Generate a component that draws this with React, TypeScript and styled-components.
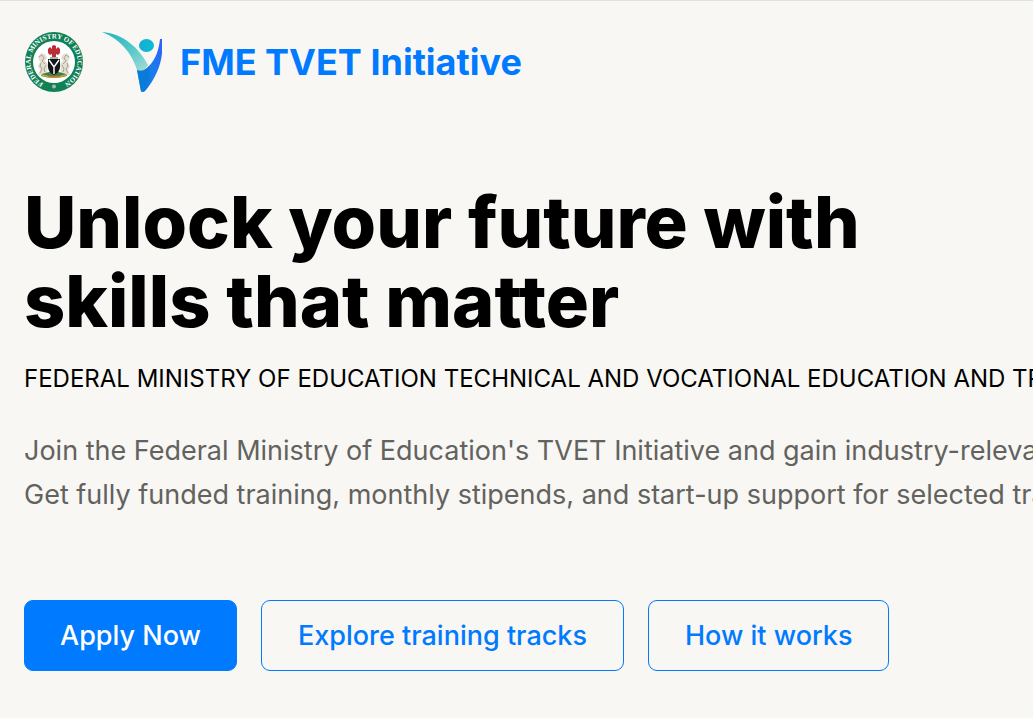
import React from "react";
import styled, { createGlobalStyle } from "styled-components";

const GlobalStyle = createGlobalStyle`
  *, *::before, *::after { box-sizing: border-box; }
  body {
    margin: 0;
    background: #f8f7f3;
    color: #000;
    font-family: Inter, "Liberation Sans", sans-serif;
    overflow-x: hidden;
  }
  h1, p { margin: 0; }
`;

const Page = styled.div`
  border-top: 1px solid #dfe3df;
`;

const Header = styled.header`
  padding: 31px 24px 0;
`;

const Brand = styled.a`
  display: inline-flex;
  align-items: center;
  color: #007aff;
  text-decoration: none;
`;

const BrandName = styled.span`
  margin-left: 18px;
  font-size: 36px;
  line-height: 60px;
  font-weight: 700;
  white-space: nowrap;
`;

const LogoImage = styled.svg`
  width: 60px;
  height: 60px;
  flex: none;

  & + & {
    margin-left: 18px;
  }
`;

const SealText = styled.text`
  font: 700 7px "Liberation Serif", serif;
  fill: #fff;
`;

const Hero = styled.main`
  padding: 86px 24px 47px;
  overflow: hidden;
`;

const Title = styled.h1`
  max-width: 900px;
  font-size: 72px;
  line-height: 79px;
  font-weight: 800;
`;

const Subtitle = styled.p`
  margin-top: 21px;
  font-size: 24px;
  line-height: 36px;
  white-space: nowrap;
`;

const Lead = styled.p`
  margin-top: 32px;
  font-size: 27px;
  line-height: 44px;
  color: #62625f;
  white-space: nowrap;
`;

const Actions = styled.div`
  display: flex;
  flex-wrap: wrap;
  gap: 24px;
  margin-top: 83px;
`;

const Button = styled.button<{ $primary?: boolean }>`
  padding: 14px ${(p) => (p.$primary ? 35 : 36)}px;
  border: 1px solid #007aff;
  border-radius: 9px;
  background: ${(p) => (p.$primary ? "#007aff" : "transparent")};
  color: ${(p) => (p.$primary ? "#fff" : "#007aff")};
  font-family: inherit;
  font-size: 27px;
  line-height: 41px;
  font-weight: 500;
  cursor: pointer;
`;

const Seal = () => (
  <LogoImage viewBox="0 0 60 60" role="img" aria-label="Federal Ministry of Education seal">
    <defs>
      <path id="sealPath" d="M19.5 51A23.500 23.500 0 1 1 40.5 51" />
    </defs>
    <ellipse cx="30" cy="30" rx="29" ry="30" fill="#108057" />
    <circle cx="30" cy="30" r="21" fill="#fff" />
    <SealText>
      <textPath href="#sealPath" startOffset="50%" textAnchor="middle">
        FEDERAL MINISTRY OF EDUCATION
      </textPath>
    </SealText>
    <circle cx="30" cy="54.500" r="2" fill="#a9b7ad" />
    <path d="M14 25l3-4 4 1 2 4-2 3 3 3-1 9-4 2-5 0 2-5-2-4 2-4z" fill="#e3e0d2" />
    <path d="M46 25l-3-4-4 1-2 4 2 3-3 3 1 9 4 2 5 0-2-5 2-4-2-4z" fill="#e3e0d2" />
    <path d="M15 25l3-2 2 3-2 3 3 3M17 31l-1 3 2 3-2 4M22 33l-2 4 1 3M45 25l-3-2-2 3 2 3-3 3M43 31l1 3-2 3 2 4M38 33l2 4-1 3" fill="none" stroke="#96938a" strokeWidth="0.8" />
    <path d="M24 17l2-2 2 2 0-3 2-1 2 1 0 3 2-2 2 2 0 4-2 2-2-1 0 3h-4l0-3-2 1-2-2z" fill="#bd2d38" />
    <path d="M26 26h8" stroke="#397653" strokeWidth="1" />
    <path d="M18 42q12-5 24 0l1 2q-13 4-26 0z" fill="#398345" />
    <path d="M18 43q12 4 24 0" fill="none" stroke="#d2a52b" strokeWidth="1.4" />
    <path d="M24 44h12" stroke="#c34b32" strokeWidth="1" />
    <path d="M24 27h12v8q0 5-6 8-6-3-6-8z" fill="#111719" />
    <path d="M25 28l5 7 5-7M30 34v8" fill="none" stroke="#fff" strokeWidth="1.4" />
  </LogoImage>
);

const Figure = () => (
  <LogoImage viewBox="0 0 60 60" aria-hidden="true">
    <defs>
      <linearGradient id="wing" x1="0" y1="0" x2="1" y2="1">
        <stop offset="0" stopColor="#16b5bd" />
        <stop offset="0.55" stopColor="#57c8c9" />
        <stop offset="1" stopColor="#a5dcd7" />
      </linearGradient>
      <linearGradient id="body" x1="0" y1="1" x2="1" y2="0">
        <stop offset="0" stopColor="#087bd8" />
        <stop offset="0.5" stopColor="#187eea" />
        <stop offset="1" stopColor="#345cff" />
      </linearGradient>
      <linearGradient id="head">
        <stop offset="0" stopColor="#16add5" />
        <stop offset="1" stopColor="#0bbdd0" />
      </linearGradient>
    </defs>
    <path d="M0 0C22 2 37 16 46 33C44 38 39 40 35 38C30 22 19 7 0 0Z" fill="url(#wing)" />
    <path d="M35 38C39 40 44 38 47 34C54 27 57 17 58 7H60C62 27 56 43 44 58Q42 61 39 59Q37 49 35 38Z" fill="url(#body)" />
    <path d="M35 38C39 40 43 38 47 34C50 43 46 52 42 60H39Q37 49 35 38Z" fill="#087bd6" opacity=".65" />
    <ellipse cx="44.500" cy="13.500" rx="7.500" ry="6.500" fill="url(#head)" />
  </LogoImage>
);

export default function App() {
  return (
    <>
      <GlobalStyle />
      <Page>
        <Header>
          <Brand href="#">
            <Seal />
            <Figure />
            <BrandName>FME TVET Initiative</BrandName>
          </Brand>
        </Header>
        <Hero>
          <Title>
            Unlock your future with
            <br />
            skills that matter
          </Title>
          <Subtitle>
            FEDERAL MINISTRY OF EDUCATION TECHNICAL AND VOCATIONAL EDUCATION AND TRAINING
          </Subtitle>
          <Lead>
            Join the Federal Ministry of Education's TVET Initiative and gain industry-relevant skills.
            <br />
            Get fully funded training, monthly stipends, and start-up support for selected trainees.
          </Lead>
          <Actions>
            <Button type="button" $primary>Apply Now</Button>
            <Button type="button">Explore training tracks</Button>
            <Button type="button">How it works</Button>
          </Actions>
        </Hero>
      </Page>
    </>
  );
}
